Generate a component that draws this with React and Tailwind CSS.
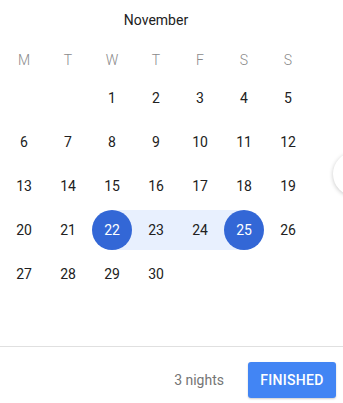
import React from "react";

const weekdays = ["M", "T", "W", "T", "F", "S", "S"];
const weeks = [
  [null, null, 1, 2, 3, 4, 5],
  [6, 7, 8, 9, 10, 11, 12],
  [13, 14, 15, 16, 17, 18, 19],
  [20, 21, 22, 23, 24, 25, 26],
  [27, 28, 29, 30, null, null, null],
];
const START = 22;
const END = 25;

function DayCell({ d }) {
  if (d === null) return <div className="h-11" />;
  const isEdge = d === START || d === END;
  const inRange = d >= START && d <= END;
  let band = "";
  if (inRange) {
    if (d === START) band = "left-1/2 right-0";
    else if (d === END) band = "left-0 right-1/2";
    else band = "left-0 right-0";
  }
  return (
    <div className="relative h-11 flex items-center justify-center">
      {inRange && (
        <div className={`absolute top-[2px] bottom-[2px] bg-[#e8f0fe] ${band}`} />
      )}
      {isEdge ? (
        <div className="relative z-10 w-10 h-10 rounded-full bg-[#3367d6] text-white flex items-center justify-center text-[14px]">
          {d}
        </div>
      ) : (
        <span className="relative z-10 text-[14px] text-[#212121]">{d}</span>
      )}
    </div>
  );
}

export default function App() {
  return (
    <div
      className="relative w-[343px] h-[403px] bg-white overflow-hidden"
      style={{ fontFamily: "Roboto, 'Liberation Sans', sans-serif" }}
    >
      <div className="pl-[2px] w-[310px]">
        <div className="h-10 flex items-center justify-center text-[14px] text-[#212121]">
          November
        </div>
        <div className="mt-1 h-8 grid grid-cols-7">
          {weekdays.map((w, i) => (
            <div key={i} className="flex items-center justify-center text-[14px] font-light text-[#8a8a8a]">
              {w}
            </div>
          ))}
        </div>
        {weeks.map((wk, i) => (
          <div key={i} className="grid grid-cols-7">
            {wk.map((d, j) => (
              <DayCell key={j} d={d} />
            ))}
          </div>
        ))}
      </div>

      <div className="absolute left-[333px] top-[152px] w-11 h-11 rounded-full bg-white shadow-[0_1px_4px_rgba(0,0,0,0.22)]" />

      <div className="mt-[50px] border-t border-[#e0e0e0] pt-[15px] pr-[7px] flex items-center justify-end">
        <span className="text-[14px] text-[#757575] mr-6">3 nights</span>
        <button className="h-9 w-[88px] rounded-[3px] bg-[#4285f4] text-white text-[14px] font-medium tracking-[0.3px] shadow-[0_1px_2px_rgba(0,0,0,0.2)]">
          FINISHED
        </button>
      </div>
    </div>
  );
}
